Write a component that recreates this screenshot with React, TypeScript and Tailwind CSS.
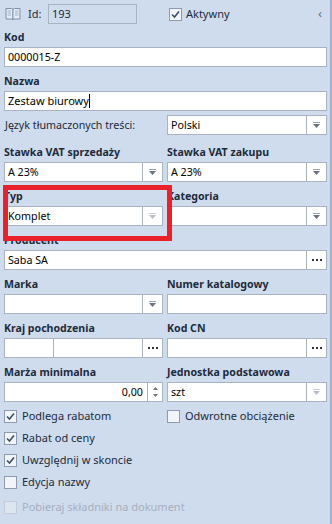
import React from 'react';

const LABEL = 'h-[16px] leading-[16px] text-[10.6px] font-bold text-[#1d2b3c] whitespace-nowrap';
const BOX = 'h-[20px] border border-[#a9b3c2] bg-white flex items-center';
const TXT = 'text-[10.7px]';
const BIG = 'text-[11px]';

function Arrow({ dim }: { dim?: boolean }) {
    return (
        <div className="w-[20px] h-full border-l border-[#a9b3c2] flex flex-col items-center justify-center gap-[1px] shrink-0">
            <span className={`w-[7px] h-px ${dim ? 'bg-[#c9d0da]' : 'bg-[#9aa3b0]'}`} />
            <svg width="7" height="4" viewBox="0 0 7 4">
                <path d="M0 0 H7 L3.5 4 Z" fill={dim ? '#b8c0cc' : '#6b7280'} />
            </svg>
        </div>
    );
}

function Dots() {
    return (
        <div className="w-[20px] h-full border-l border-[#a9b3c2] flex items-center justify-center gap-[2px] shrink-0">
            <span className="w-[2px] h-[2px] bg-[#333]" />
            <span className="w-[2px] h-[2px] bg-[#333]" />
            <span className="w-[2px] h-[2px] bg-[#333]" />
        </div>
    );
}

function Select({ value, dim }: { value?: string; dim?: boolean }) {
    return (
        <div className={`${BOX} ${dim ? 'bg-[#cfdcee]' : ''}`}>
            <span className={`flex-1 px-[3px] truncate ${TXT} text-black`}>{value}</span>
            <Arrow dim={dim} />
        </div>
    );
}

function Field({ label, children, className = '' }: { label: string; children: React.ReactNode; className?: string }) {
    return (
        <div className={`flex flex-col ${className}`}>
            <div className={`${LABEL} mb-[2px]`}>{label}</div>
            {children}
        </div>
    );
}

function Tick() {
    return (
        <svg width="9" height="9" viewBox="0 0 9 9">
            <path d="M1 4.5 L3.5 7 L8 1.5" stroke="#3d4f6b" strokeWidth="1.6" fill="none" />
        </svg>
    );
}

function Check({ checked, label, dim }: { checked?: boolean; label: string; dim?: boolean }) {
    return (
        <div className="flex items-center gap-[5px] h-[22px]">
            <div className={`w-[13px] h-[13px] shrink-0 border flex items-center justify-center ${dim ? 'border-[#c4ccd8] bg-[#dde5f0]' : 'border-[#8e9aad] bg-[#f1f4f8]'}`}>
                {checked && <Tick />}
            </div>
            <span className={`${BIG} whitespace-nowrap ${dim ? 'text-[#a7afbb]' : 'text-[#1d2b3c]'}`}>{label}</span>
        </div>
    );
}

export default function App() {
    return (
        <div className="relative w-[332px] h-[524px] bg-[#cfdcee] border-r-2 border-r-[#9eb0cc] overflow-hidden" style={{ fontFamily: '"Noto Sans", "DejaVu Sans", sans-serif' }}>
            <div className="w-[323px] ml-[4px] pt-[4px] flex flex-col">
                {/* header row */}
                <div className="flex items-center h-[20px]">
                    <svg width="16" height="14" viewBox="0 0 16 14" className="ml-[1px] shrink-0">
                        <path d="M1 1.5 H6.5 Q8 1.5 8 3 V13 Q8 12 6.5 12 H1 Z" fill="#e6edf6" stroke="#7e8fa8" />
                        <path d="M15 1.5 H9.5 Q8 1.5 8 3 V13 Q8 12 9.5 12 H15 Z" fill="#e6edf6" stroke="#7e8fa8" />
                        <path d="M2.5 4 H6 M2.5 6 H6 M2.5 8 H6 M10 4 H13.5 M10 6 H13.5 M10 8 H13.5" stroke="#9fb0c8" />
                    </svg>
                    <span className={`ml-[7px] w-[14px] ${BIG} text-[#1d2b3c]`}>Id:</span>
                    <div className={`ml-[6px] w-[89px] h-[20px] border border-[#a9b3c2] flex items-center px-[3px] ${BIG} text-[#1d2b3c]`}>193</div>
                    <div className="ml-[32px] w-[13px] h-[13px] border border-[#8e9aad] bg-[#f1f4f8] flex items-center justify-center">
                        <Tick />
                    </div>
                    <span className={`ml-[4px] ${BIG} text-[#1d2b3c]`}>Aktywny</span>
                    <span className="ml-auto mr-[5px] text-[#6b7280] text-[13px]">‹</span>
                </div>

                <Field label="Kod" className="mt-[5px]">
                    <div className={BOX}><span className={`px-[3px] ${TXT}`}>0000015-Z</span></div>
                </Field>
                <Field label="Nazwa" className="mt-[6px]">
                    <div className={BOX}>
                        <span className={`pl-[3px] ${BIG}`}>Zestaw biurowy</span>
                        <span className="w-px h-[14px] bg-black" />
                    </div>
                </Field>

                <div className="mt-[4px] flex items-center gap-[4px]">
                    <div className={`w-[159px] pl-[1px] ${TXT} text-[#1d2b3c] whitespace-nowrap`}>Język tłumaczonych treści:</div>
                    <div className="w-[160px]"><Select value="Polski" /></div>
                </div>

                <div className="mt-[9px] grid grid-cols-[159px_160px] gap-x-[4px] gap-y-[6px]">
                    <Field label="Stawka VAT sprzedaży"><Select value="A 23%" /></Field>
                    <Field label="Stawka VAT zakupu"><Select value="A 23%" /></Field>
                    <Field label="Typ"><Select value="Komplet" dim /></Field>
                    <Field label="Kategoria"><Select /></Field>
                    <Field label="Producent" className="col-span-2">
                        <div className={BOX}>
                            <span className={`flex-1 px-[3px] ${TXT}`}>Saba SA</span>
                            <Dots />
                        </div>
                    </Field>
                    <Field label="Marka"><Select /></Field>
                    <Field label="Numer katalogowy"><div className={BOX} /></Field>
                    <Field label="Kraj pochodzenia">
                        <div className="flex h-[20px]">
                            <div className="w-[50px] h-full border border-[#a9b3c2] bg-white" />
                            <div className={`${BOX} flex-1 border-l-0`}>
                                <span className="flex-1" />
                                <Dots />
                            </div>
                        </div>
                    </Field>
                    <Field label="Kod CN">
                        <div className={BOX}>
                            <span className="flex-1" />
                            <Dots />
                        </div>
                    </Field>
                    <Field label="Marża minimalna">
                        <div className={BOX}>
                            <span className={`flex-1 text-right pr-[4px] ${TXT}`}>0,00</span>
                            <div className="w-[15px] h-full border-l border-[#a9b3c2] flex flex-col items-center justify-center gap-[4px]">
                                <svg width="5" height="3" viewBox="0 0 5 3"><path d="M0 3 H5 L2.5 0 Z" fill="#6b7280" /></svg>
                                <svg width="5" height="3" viewBox="0 0 5 3"><path d="M0 0 H5 L2.5 3 Z" fill="#6b7280" /></svg>
                            </div>
                        </div>
                    </Field>
                    <Field label="Jednostka podstawowa"><Select value="szt" dim /></Field>
                </div>

                <div className="mt-[3px] grid grid-cols-[159px_160px] gap-x-[4px]">
                    <div className="flex flex-col">
                        <Check checked label="Podlega rabatom" />
                        <Check checked label="Rabat od ceny" />
                        <Check checked label="Uwzględnij w skoncie" />
                        <Check label="Edycja nazwy" />
                        <div className="mt-[3px]"><Check dim label="Pobieraj składniki na dokument" /></div>
                    </div>
                    <div className="flex flex-col">
                        <Check label="Odwrotne obciążenie" />
                    </div>
                </div>
            </div>

            {/* annotation */}
            <div className="absolute left-[3px] top-[185px] w-[169px] h-[56px] border-[5px] border-[#e8212b]" />
        </div>
    );
}
